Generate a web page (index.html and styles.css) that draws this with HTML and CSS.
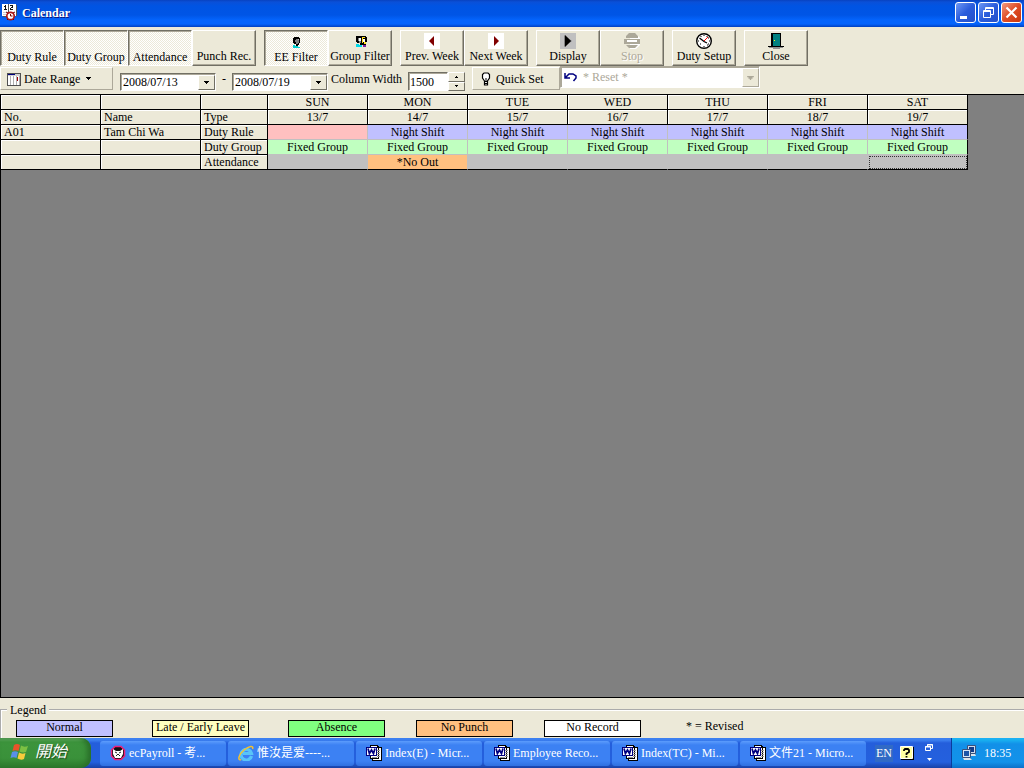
FILE: index.html
```html
<!DOCTYPE html>
<html lang="en">
<head>
<meta charset="utf-8">
<title>Calendar</title>
<link rel="stylesheet" href="styles.css">
</head>
<body>
<svg class="defs" aria-hidden="true">
  <symbol id="word" viewBox="0 0 16 16">
    <g shape-rendering="crispEdges">
      <path fill="#000" d="M4 0h8v1h1v1h3v14H6v-2H4z"/>
      <path fill="#fff" d="M5 1h6v2h1v10H5z"/>
      <path fill="#fff" d="M13 3h2v12H7v-1h6z"/>
      <path fill="#999" d="M11 5h3v1h-3zM11 7h3v1h-3zM11 9h3v1h-3zM11 11h3v1h-3zM6 12h5v1H6z"/>
      <path fill="#000080" d="M0 2h11v9H0z"/><path fill="#fff" d="M1 3h9v7H1z"/>
    </g>
    <path fill="none" stroke="#000080" stroke-width="1.700" d="M2 3.500l1.400 5L5.500 5l2 3.500L9 3.500"/>
  </symbol>
  <symbol id="down" viewBox="0 0 5 3"><path d="M0 0h5v1H4v1H3v1H2V2H1V1H0z"/></symbol>
</svg>
<div class="window">
  <header class="titlebar">
    <svg class="app-icon" viewBox="0 0 16 17" shape-rendering="crispEdges">
      <path fill="#fff" d="M0 0h14v12H0z"/><path fill="#111" d="M3 1h1v5H3zM2 2h1v1H2zM2 5h3v1H2zM8 1h3v1H8zM10 2h1v2h-1zM9 3h1v1H9zM8 4h1v1H8zM8 5h3v1H8z"/>
      <path fill="#555" d="M6 0h1v8H6zM14 1h1v11h-1zM1 12h4v1H1z"/>
      <path fill="#ccc" d="M1 8h4v1H1zM1 10h3v1H1z"/>
      <g shape-rendering="auto"><circle cx="8.500" cy="12" r="3.700" fill="#fff" stroke="#b01818" stroke-width="1.700"/><path stroke="#700" fill="none" d="M8.500 10v2h2M4 8l2 1M11 9l2-1M5 16l1-1M12 16l-1-1"/></g>
    </svg>
    <h1 class="title">Calendar</h1>
    <div class="window-controls">
      <button class="control" aria-label="Minimize"><svg viewBox="0 0 19 19"><path fill="#fff" d="M4 13h7v3H4z"/></svg></button>
      <button class="control" aria-label="Restore"><svg viewBox="0 0 19 19"><path fill="none" stroke="#fff" d="M6.500 7V4.500h8v7H12M6.500 5.500h8M4.500 7.500h7v7h-7zM4 8.500h8"/></svg></button>
      <button class="control control-close" aria-label="Close window"><svg viewBox="0 0 19 19"><path stroke="#fff" stroke-width="2.200" d="M4.500 4.500l10 10M14.500 4.500l-10 10"/></svg></button>
    </div>
  </header>

  <div class="toolbar">
    <div class="group">
      <button class="tool pressed" aria-pressed="true">Duty Rule</button>
      <button class="tool pressed" aria-pressed="true">Duty Group</button>
      <button class="tool pressed" aria-pressed="true">Attendance</button>
      <button class="tool">Punch Rec.</button>
    </div>
    <div class="group">
      <button class="tool pressed" aria-pressed="true">
        <svg viewBox="0 0 16 16" shape-rendering="crispEdges"><path d="M6 3h5v1h1v5h-1v2h-1v1H8v-2H6V9H5V4h1z"/><path fill="#808080" d="M8 5h3v4h-1v1H8V8H7V6h1z"/><path fill="#c0c0c0" d="M10 5h1v1h-1z"/><path fill="#00d0d0" d="M5 11h2v1h3v1h2v1H5z"/></svg>
        EE Filter</button>
      <button class="tool">
        <svg viewBox="0 0 16 16" shape-rendering="crispEdges"><path d="M4 3h10v1h1v5h-1v3H8v-2H5V9H4z"/><path fill="#808080" d="M6 5h3v5H7V8H6z"/><path fill="#fff" d="M7 5h2v3H7zM11 6h2v3h-2z"/><path fill="#ffe020" d="M10 4h3v1h-2v5h-1zM12 9h2v2h-2z"/><path fill="#00d8e8" d="M4 11h3v1h3v2H4z"/><path fill="#8020a0" d="M11 12h3v2h-3z"/></svg>
        Group Filter</button>
    </div>
    <div class="group">
      <button class="tool"><svg viewBox="0 0 16 16"><path fill="#fff" d="M0 0h16v16H0z"/><path fill="#800000" d="M10 3v10L5 8z"/></svg>Prev. Week</button>
      <button class="tool"><svg viewBox="0 0 16 16"><path fill="#fff" d="M0 0h16v16H0z"/><path fill="#800000" d="M6 3v10l5-5z"/></svg>Next Week</button>
    </div>
    <div class="group">
      <button class="tool"><svg viewBox="0 0 16 16"><path fill="#c0c0c0" d="M0 0h16v16H0z"/><path fill="#808080" d="M4 2l8 6-8 6z"/><path d="M5 2v12l6-6z"/></svg>Display</button>
      <button class="tool" disabled><svg viewBox="0 0 16 16"><path fill="#fff" d="M6 1h6l4 4v7l-4 4H6z"/><path fill="#aca899" d="M5 0h6l3 3v2H2V3zM0 6h16v5H0zM2 12h12l-3 3H5z"/><path fill="#fff" d="M3 7h10v2H3z"/></svg>Stop</button>
    </div>
    <div class="group">
      <button class="tool"><svg viewBox="0 0 16 16"><circle cx="8" cy="8" r="7.300" fill="#fff" stroke="#000" stroke-width="1.400"/><path stroke="#000" d="M8 2v1M8 13v1M2 8h1M13 8h1M4 11l1 0M11 12l1 0M5 3v1M11 3v1M12 5h1M12 11h1"/><path fill="none" stroke="#000" stroke-width="1.300" d="M3.500 5L8 8.500l3 1.500"/><path stroke="#f00" d="M8 8l4-4"/></svg>Duty Setup</button>
    </div>
    <div class="group">
      <button class="tool"><svg viewBox="0 0 16 16" shape-rendering="crispEdges"><path d="M3 0h10v13h3v1H0v-1h3z"/><path fill="#008080" d="M5 1h7v12H5z"/><path fill="#ff0" d="M6 7h1v1H6z"/><path fill="#909090" d="M1 14h14v1H1zM5 15h7v1H5z"/></svg>Close</button>
    </div>
  </div>

  <div class="options">
    <button class="flat date-range">
      <svg class="icon-small" viewBox="0 0 14 13" shape-rendering="crispEdges"><path fill="#505050" d="M0 0h14v13H0z"/><path fill="#fff" d="M1 3h12v9H1z"/><path fill="#000080" d="M1 1h7v1H1z"/><path fill="#d0d0d0" d="M1 2h12v1H1zM8 1h5v1H8z"/><path fill="#b0b0b0" d="M3 3h1v9H3zM6 3h1v9H6zM9 3h1v9H9zM12 3h1v9h-1z"/><path fill="#a00000" d="M10 4h1v4h-1z"/></svg>
      Date Range
      <svg class="caret"><use href="#down"/></svg>
    </button>
    <span class="combo date-combo"><select aria-label="From date"><option>2008/07/13</option></select><span class="arrow"><svg class="caret"><use href="#down"/></svg></span></span>
    <span class="dash">-</span>
    <span class="combo date-combo"><select aria-label="To date"><option>2008/07/19</option></select><span class="arrow"><svg class="caret"><use href="#down"/></svg></span></span>
    <label class="width-label" for="col-width">Column Width</label>
    <span class="spinner">
      <input id="col-width" type="text" value="1500">
      <span class="steps">
        <button aria-label="Increase"><svg viewBox="0 0 3 2"><path d="M1 0h1v1h1v1H0V1h1z"/></svg></button>
        <button aria-label="Decrease"><svg viewBox="0 0 3 2"><path d="M0 0h3v1H2v1H1V1H0z"/></svg></button>
      </span>
    </span>
    <button class="flat quick-set">
      <svg class="icon-small" viewBox="0 0 14 14"><path fill="#fff" stroke="#000" stroke-width="1.200" d="M5.500 9L3.500 6V2.500l1.500-1.500h4l1.500 1.500V6l-2 3v4h-3z"/><path stroke="#000" d="M6 9.500h3M6 11.500h3M7 6v3"/></svg>
      Quick Set
    </button>
    <span class="combo reset-combo">
      <svg class="undo" viewBox="0 0 13 10"><path fill="none" stroke="#000080" stroke-width="1.500" d="M1 1v5h5M1.500 5.500L5 2h4l3 2v2L9.500 9"/></svg>
      <select aria-label="Quick set value" disabled><option>* Reset *</option></select><span class="arrow"><svg class="caret"><use href="#down"/></svg></span>
    </span>
  </div>

  <main class="sheet">
    <table class="calendar">
      <colgroup><col class="wide"><col class="wide"><col class="type"><col class="wide"><col class="wide"><col class="wide"><col class="wide"><col class="wide"><col class="wide"><col class="wide"></colgroup>
      <thead>
        <tr><th></th><th></th><th></th><th class="day">SUN</th><th class="day">MON</th><th class="day">TUE</th><th class="day">WED</th><th class="day">THU</th><th class="day">FRI</th><th class="day">SAT</th></tr>
        <tr><th>No.</th><th>Name</th><th>Type</th><th class="day">13/7</th><th class="day">14/7</th><th class="day">15/7</th><th class="day">16/7</th><th class="day">17/7</th><th class="day">18/7</th><th class="day">19/7</th></tr>
      </thead>
      <tbody>
        <tr><th>A01</th><th>Tam Chi Wa</th><th>Duty Rule</th><td class="holiday"></td><td class="shift">Night Shift</td><td class="shift">Night Shift</td><td class="shift">Night Shift</td><td class="shift">Night Shift</td><td class="shift">Night Shift</td><td class="shift">Night Shift</td></tr>
        <tr><th></th><th></th><th>Duty Group</th><td class="fixed">Fixed Group</td><td class="fixed">Fixed Group</td><td class="fixed">Fixed Group</td><td class="fixed">Fixed Group</td><td class="fixed">Fixed Group</td><td class="fixed">Fixed Group</td><td class="fixed">Fixed Group</td></tr>
        <tr class="last"><th></th><th></th><th>Attendance</th><td></td><td class="punch">*No Out</td><td></td><td></td><td></td><td></td><td class="focused"></td></tr>
      </tbody>
    </table>
  </main>

  <fieldset class="legend">
    <legend>Legend</legend>
    <div class="keys">
      <span class="key normal">Normal</span>
      <span class="key late">Late / Early Leave</span>
      <span class="key absence">Absence</span>
      <span class="key no-punch">No Punch</span>
      <span class="key no-record">No Record</span>
      <span class="note">* = Revised</span>
    </div>
  </fieldset>
</div>

<nav class="taskbar">
  <button class="start">
    <svg viewBox="0 0 20 18"><path fill="#e8532a" d="M4 2q3-2 6 0L8.500 8q-3-1.500-6 0z"/><path fill="#7cc043" d="M11 2.500q3 2 7 .5l-2 6q-3 1-6.500-.5z"/><path fill="#5a8fe8" d="M2 9q3-1.500 6 0l-1.500 6q-3-1.500-6 0z"/><path fill="#f8cc3c" d="M9 9.500q3 2 6.500.5l-1.500 6q-3 1.500-6.500-.5z"/></svg>
    開始
  </button>
  <div class="tasks">
    <button class="task"><svg viewBox="0 0 16 16"><path fill="#111" stroke="#f0207a" stroke-width="1.500" d="M5 1.500h6L14.500 5v6L11 14.500H5L1.500 11V5z"/><path fill="#fff" d="M3 4l3 2h4l3-2v5l-2 4H5L3 9z"/><path stroke="#222" fill="none" d="M5 7l2 1M11 7L9 8M6 11l2-2 2 2"/></svg><span>ecPayroll - 考...</span></button>
    <button class="task"><svg viewBox="0 0 16 16"><path fill="none" stroke="#58c4f8" stroke-width="3.200" d="M13.500 11A5.300 5.300 0 1 1 13.500 8.500H5"/><path fill="none" stroke="#f4c030" stroke-width="1.500" d="M3 14.500C-1 16 1 9 6 5s10-5 8.500-1"/></svg><span>惟汝是爱----...</span></button>
    <button class="task"><svg><use href="#word"/></svg><span>Index(E) - Micr...</span></button>
    <button class="task"><svg><use href="#word"/></svg><span>Employee Reco...</span></button>
    <button class="task"><svg><use href="#word"/></svg><span>Index(TC) - Mi...</span></button>
    <button class="task"><svg><use href="#word"/></svg><span>文件21 - Micro...</span></button>
  </div>
  <div class="language">
    <button class="lang">EN</button>
    <svg class="help" viewBox="0 0 14 14"><path d="M1 1h13v13H1z"/><path fill="#ffffa0" stroke="#fff" d="M.5.5h12v12H.5z"/><path fill="none" stroke="#000" stroke-width="1.800" d="M4 5V4l1-1h3l1 1v2L6.500 7.500V9M6.500 10v1.500"/></svg>
    <svg class="lang-menu" viewBox="0 0 9 18"><path fill="none" stroke="#fff" d="M2.500 2V.5h5v4H6M2 1h6M.5 2.500h5v4h-5zM0 3h6"/><path fill="#fff" d="M2 14h5l-2.500 3z"/></svg>
  </div>
  <div class="tray">
    <svg viewBox="0 0 16 16"><path fill="#d0dcec" stroke="#38507c" d="M6.500.5h8v8h-8z"/><path fill="#123a88" d="M8 2h5v5H8z"/><path fill="#d8e4f4" stroke="#38507c" d="M1.500 4.500h8v8h-8z"/><path fill="#1c54a8" d="M3 6h5v5H3z"/><path fill="#dce4ec" d="M2 13h7l2 2H3zM10 9h4l1 2h-5z"/></svg>
    <time>18:35</time>
  </div>
</nav>
</body>
</html>
```
FILE: styles.css
```css
* { box-sizing: border-box; }

body {
  margin: 0;
  height: 100vh;
  display: flex;
  flex-direction: column;
  background: #ece9d8;
  color: #000;
  font: 12px/14px "Liberation Serif", "Noto Sans CJK TC", serif;
}

button, input, select { font: inherit; color: inherit; margin: 0; border-radius: 0; }
.defs { display: none; }
svg { display: block; flex: none; }

.window { flex: 1; min-height: 0; display: flex; flex-direction: column; }

/* Title bar */
.titlebar {
  flex: none;
  height: 27px;
  display: flex;
  align-items: center;
  padding: 0 2px 2px;
  background: linear-gradient(#0842c0 0, #0a50d8 2px, #0054e3 6px, #0055e6 15px, #0464fc 20px, #0464fc 24px, #0040c0 27px);
}
.app-icon { width: 16px; height: 17px; }
.title { flex: 1; margin: 0 4px; font-size: 12px; line-height: 16px; color: #fff; text-shadow: 1px 1px #0a1883; }
.window-controls { display: flex; gap: 2px; }
.control {
  width: 21px;
  height: 21px;
  padding: 0;
  border: 1px solid #fff;
  border-radius: 3px;
  background: linear-gradient(135deg, #6f98f4, #2a5cdc 50%, #2450c8);
}
.control-close { background: linear-gradient(135deg, #f09a80, #e04c24 50%, #c83810); }
.control svg { width: 19px; height: 19px; }

/* Toolbar */
.toolbar { flex: none; display: flex; gap: 8px; padding-top: 3px; }
.group { display: flex; }
.tool {
  width: 64px;
  height: 36px;
  padding: 0 0 2px;
  display: flex;
  flex-direction: column;
  align-items: center;
  justify-content: flex-end;
  white-space: nowrap;
  background: #ece9d8;
  border: 1px solid;
  border-color: #fff #716f64 #716f64 #fff;
  box-shadow: inset -1px -1px #aca899;
}
.tool svg { width: 16px; height: 16px; }
.tool.pressed {
  padding-bottom: 1px;
  border-color: #716f64 #fff #fff #716f64;
  box-shadow: inset 1px 1px #aca899;
  background: repeating-conic-gradient(#fff 0 25%, #ece9d8 0 50%) 0 0 / 2px 2px;
}
.tool:disabled { color: #aca899; text-shadow: 1px 1px #fff; }

/* Options row */
.options { flex: none; height: 28px; display: flex; align-items: flex-start; }
.flat {
  height: 23px;
  margin-top: 1px;
  padding: 0 6px;
  display: flex;
  align-items: center;
  gap: 3px;
  background: #ece9d8;
  border: 1px solid;
  border-color: #fff #aca899 #aca899 #fff;
}
.date-range { width: 113px; margin-right: 7px; }
.date-range .caret { margin-left: 3px; }
.icon-small { width: 14px; height: 14px; }
.caret { width: 5px; height: 3px; }

.combo {
  position: relative;
  display: flex;
  align-items: center;
  background: #fff;
  border: 1px solid;
  border-color: #716f64 #fff #fff #716f64;
  box-shadow: inset 1px 1px #aca899;
}
.combo select {
  flex: 1;
  height: 100%;
  min-width: 0;
  padding: 0 2px;
  appearance: none;
  border: 0;
  background: none;
}
.date-combo { width: 96px; height: 18px; margin-top: 7px; }
.arrow {
  position: absolute;
  top: 1px;
  right: 0;
  bottom: 0;
  width: 17px;
  display: flex;
  align-items: center;
  justify-content: center;
  pointer-events: none;
  background: #ece9d8;
  border: 1px solid;
  border-color: #fff #716f64 #716f64 #fff;
}
.dash { width: 16px; margin-top: 6px; text-align: center; }
.width-label { width: 80px; padding-left: 3px; margin-top: 6px; white-space: nowrap; }
.spinner { display: flex; width: 57px; height: 19px; margin: 6px 7px 0 0; }
.spinner input {
  width: 40px;
  padding: 1px 1px 0;
  background: #fff;
  border: 1px solid;
  border-color: #716f64 #fff #fff #716f64;
  box-shadow: inset 1px 1px #aca899;
}
.steps { flex: 1; display: flex; flex-direction: column; }
.steps button {
  flex: 1;
  padding: 0;
  display: flex;
  align-items: center;
  justify-content: center;
  background: #ece9d8;
  border: 1px solid;
  border-color: #fff #716f64 #716f64 #fff;
}
.steps svg { width: 3px; height: 2px; }
.quick-set { width: 88px; }
.reset-combo { width: 200px; height: 22px; padding-left: 3px; border-color: #aca899 #fff #fff #aca899; }
.undo { width: 13px; height: 10px; }
.reset-combo select { padding-left: 6px; }
.reset-combo select:disabled { color: #aca899; opacity: 1; }
.reset-combo .arrow { border-color: #fff #aca899 #aca899 #fff; }
.reset-combo .caret { width: 7px; height: 4px; fill: #aca899; }

/* Calendar sheet */
.sheet {
  flex: 1;
  min-height: 0;
  overflow: auto;
  background: #808080;
  border: 1px solid #000;
  border-right: 0;
}
.calendar { table-layout: fixed; width: 967px; border-collapse: separate; border-spacing: 0; line-height: 14px; }
.wide { width: 100px; }
.type { width: 67px; }
.calendar th, .calendar td { height: 15px; padding: 0 3px; white-space: nowrap; font-weight: normal; }
.calendar th {
  text-align: left;
  background: #ece9d8;
  border: 1px solid #000;
  border-width: 0 1px 1px 0;
  box-shadow: inset 1px 1px #fff;
}
.calendar .day { text-align: center; }
.calendar td {
  text-align: center;
  background: #c0c0c0;
  border: 1px solid #c0c0c0;
  border-width: 0 1px 1px 0;
}
.calendar td:last-child { border-right-color: #000; }
.calendar .last td { border-bottom-color: #000; }
.calendar .holiday { background: #ffc0c0; }
.calendar .shift { background: #c0c0ff; }
.calendar .fixed { background: #c0ffc0; }
.calendar .punch { background: #ffc080; }
.calendar .focused { outline: 1px dotted #333; outline-offset: -2px; }

/* Legend */
.legend {
  flex: none;
  min-width: 0;
  height: 35px;
  margin: 5px 0 0;
  padding: 0 0 0 14px;
  border: 2px groove #fff;
  border-width: 2px 0 0 2px;
}
.legend legend { margin-left: -9px; padding: 0 3px; }
.keys { display: flex; padding-top: 3px; line-height: 13px; }
.key {
  width: 97px;
  height: 17px;
  margin-right: 39px;
  border: 1px solid #000;
  text-align: center;
  white-space: nowrap;
}
.absence, .no-punch { margin-right: 31px; }
.no-record { margin-right: 45px; }
.normal { background: #c0c0ff; }
.late { background: #ffffc0; }
.absence { background: #80ff80; }
.no-punch { background: #ffc080; }
.no-record { background: #fff; }

/* Taskbar */
.taskbar {
  flex: none;
  height: 30px;
  display: flex;
  color: #fff;
  background: linear-gradient(#3c80f0 0, #3c80f0 2px, #245edb 5px, #2460de 24px, #1941a5 30px);
}
.start {
  width: 91px;
  padding: 0 0 2px 10px;
  display: flex;
  align-items: center;
  gap: 5px;
  border: 0;
  border-radius: 0 10px 10px 0;
  font-size: 16px;
  font-style: italic;
  text-shadow: 1px 1px 1px #1c4a1c;
  background: linear-gradient(#6cb46c 0, #3c943c 4px, #3a913a 20px, #2c7a2c 30px);
  box-shadow: inset -4px 0 5px #2a702a;
}
.start svg { width: 20px; height: 18px; }
.tasks { flex: 1; min-width: 0; display: flex; gap: 2px; padding: 3px 0 2px 9px; }
.task {
  flex: 0 1 126px;
  min-width: 0;
  padding: 0 4px 2px 10px;
  display: flex;
  align-items: center;
  gap: 3px;
  overflow: hidden;
  white-space: nowrap;
  border: 0;
  border-radius: 3px;
  background: linear-gradient(#5c9cfc 0, #3c81f3 4px, #3c81f3 20px, #3070e0 25px);
}
.task svg { width: 16px; height: 16px; }
.language { flex: none; width: 83px; display: flex; align-items: center; gap: 7px; padding-left: 7px; }
.lang { width: 18px; height: 17px; padding: 0; border: 0; background: #316ac5; }
.help { width: 14px; height: 14px; }
.lang-menu { width: 9px; height: 18px; margin-left: 4px; }
.tray {
  flex: none;
  width: 73px;
  display: flex;
  align-items: center;
  gap: 7px;
  padding-left: 9px;
  border-left: 1px solid #0a3c9c;
  background: linear-gradient(#1cb0f4 0, #18b0f0 2px, #1290e8 6px, #1292ea 24px, #0c70c8 30px);
}
.tray svg { width: 16px; height: 16px; }
```
